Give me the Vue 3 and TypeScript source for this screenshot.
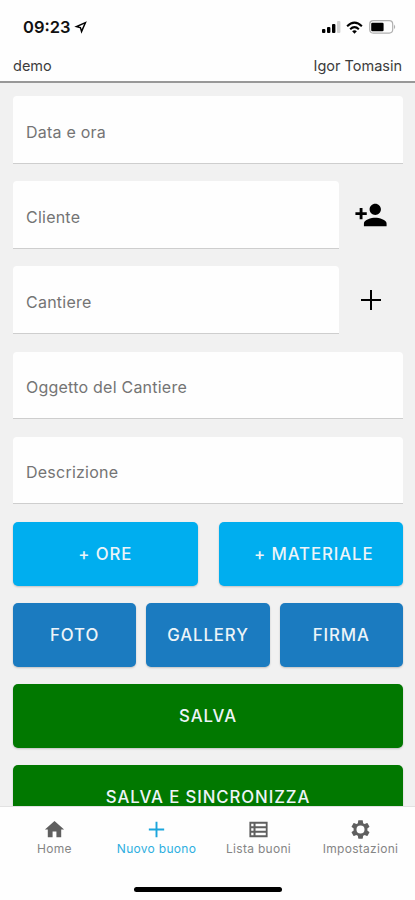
<script setup lang="ts">
interface Field {
  label: string
  action?: 'person' | 'plus'
}

interface Tab {
  id: string
  label: string
  active?: boolean
}

const fields: Field[] = [
  { label: 'Data e ora' },
  { label: 'Cliente', action: 'person' },
  { label: 'Cantiere', action: 'plus' },
  { label: 'Oggetto del Cantiere' },
  { label: 'Descrizione' },
]

const tabs: Tab[] = [
  { id: 'home', label: 'Home' },
  { id: 'new', label: 'Nuovo buono', active: true },
  { id: 'list', label: 'Lista buoni' },
  { id: 'settings', label: 'Impostazioni' },
]
</script>

<template>
  <div class="screen">
    <div class="status">
      <div class="clock">
        <span class="time">09:23</span>
        <svg class="location" viewBox="0 0 14 14"><path fill-rule="evenodd" d="M13.8.3 8 13.8 6.3 7.7.3 6.2ZM10.8 3.2 5 5.9 7.5 6.5 8.3 9Z" /></svg>
      </div>
      <div class="signals">
        <svg class="bars" viewBox="0 0 19 12">
          <rect x="0" y="8" width="3.4" height="4" rx="1" />
          <rect x="5" y="6" width="3.4" height="6" rx="1" />
          <rect x="10" y="3" width="3.4" height="9" rx="1" />
          <rect x="15" y="0" width="3.4" height="12" rx="1" fill="#d2d2d2" />
        </svg>
        <svg class="wifi" viewBox="0 0 18 13">
          <g fill="none" stroke="#000" stroke-width="2.2">
            <path d="M1.2 5.1Q9-2.3 16.8 5.1" />
            <path d="M4.4 8.3Q9 4 13.6 8.3" />
          </g>
          <path d="M6.5 10.4Q9 8.4 11.5 10.4L9 13Z" />
        </svg>
        <svg class="battery" viewBox="0 0 28 14">
          <rect x=".7" y=".7" width="23" height="12.4" rx="3.5" fill="none" stroke="#b0b0b0" stroke-width="1.2" />
          <rect x="2.2" y="2.8" width="12.4" height="8.4" rx="1.2" />
          <path d="M25 4.5q2.4 2.4 0 4.8Z" fill="#b0b0b0" />
        </svg>
      </div>
    </div>

    <header class="header">
      <span>demo</span>
      <span>Igor Tomasin</span>
    </header>

    <main class="content">
      <div class="fields">
        <div v-for="field in fields" :key="field.label" class="row">
          <div class="field">{{ field.label }}</div>
          <button v-if="field.action" class="action" type="button">
            <svg v-if="field.action === 'person'" class="person" viewBox="0 0 24 24">
              <path d="M15 12c2.21 0 4-1.79 4-4s-1.79-4-4-4-4 1.79-4 4 1.79 4 4 4zm-9-2V7H4v3H1v2h3v3h2v-3h3v-2H6zm9 4c-2.67 0-8 1.34-8 4v2h16v-2c0-2.66-5.33-4-8-4z" />
            </svg>
            <svg v-else class="plus" viewBox="0 0 20 20"><path d="M9 0h2v9h9v2h-9v9H9v-9H0V9h9Z" /></svg>
          </button>
        </div>
      </div>

      <div class="buttons">
        <div class="pair">
          <button class="btn cyan" type="button">+ ORE</button>
          <button class="btn cyan wide-label" type="button">+ MATERIALE</button>
        </div>
        <div class="triple">
          <button class="btn blue" type="button">FOTO</button>
          <button class="btn blue" type="button">GALLERY</button>
          <button class="btn blue" type="button">FIRMA</button>
        </div>
        <button class="btn green" type="button">SALVA</button>
        <button class="btn green" type="button">SALVA E SINCRONIZZA</button>
      </div>
    </main>

    <footer class="footer">
      <nav class="tabs">
        <div v-for="tab in tabs" :key="tab.id" class="tab" :class="{ active: tab.active }">
          <svg class="tab-icon" viewBox="0 0 24 24">
            <path v-if="tab.id === 'home'" d="M10 20v-6h4v6h5v-8h3L12 3 2 12h3v8z" />
            <path v-else-if="tab.id === 'new'" d="M11 4h2v7h7v2h-7v7h-2v-7H4v-2h7Z" />
            <path v-else-if="tab.id === 'list'" fill-rule="evenodd" d="M2.5 4h19v16h-19ZM4.4 5.9v2.7h2.4V5.9Zm4.5 0v2.7h10.7V5.9ZM4.4 10.7v2.7h2.4v-2.7Zm4.5 0v2.7h10.7v-2.7ZM4.4 15.4v2.7h2.4v-2.7Zm4.5 0v2.7h10.7v-2.7Z" />
            <path v-else d="M19.14 12.94c.04-.3.06-.61.06-.94 0-.32-.02-.64-.07-.94l2.03-1.58c.18-.14.23-.41.12-.61l-1.92-3.32c-.12-.22-.37-.29-.59-.22l-2.39.96c-.5-.38-1.03-.7-1.62-.94l-.36-2.54c-.04-.24-.24-.41-.48-.41h-3.84c-.24 0-.43.17-.47.41l-.36 2.54c-.59.24-1.13.57-1.62.94l-2.39-.96c-.22-.08-.47 0-.59.22L2.74 8.87c-.12.21-.08.47.12.61l2.03 1.58c-.05.3-.09.63-.09.94s.02.64.07.94l-2.03 1.58c-.18.14-.23.41-.12.61l1.92 3.32c.12.22.37.29.59.22l2.39-.96c.5.38 1.03.7 1.62.94l.36 2.54c.05.24.24.41.48.41h3.84c.24 0 .44-.17.47-.41l.36-2.54c.59-.24 1.13-.56 1.62-.94l2.39.96c.22.08.47 0 .59-.22l1.92-3.32c.12-.22.07-.47-.12-.61l-2.01-1.58zM12 16.2A4.2 4.2 0 1 1 12 7.8a4.2 4.2 0 0 1 0 8.4z" />
          </svg>
          <span>{{ tab.label }}</span>
        </div>
      </nav>
      <div class="indicator"></div>
    </footer>
  </div>
</template>

<style>
body {
  margin: 0;
  overflow: hidden;
}
</style>

<style scoped>
.screen {
  display: flex;
  flex-direction: column;
  height: 900px;
  overflow: hidden;
  background: #f1f1f1;
  font-family: Inter, Roboto, sans-serif;
  color: #111;
}

.status {
  box-sizing: border-box;
  flex: none;
  display: flex;
  justify-content: space-between;
  height: 52px;
  padding: 17px 18px 0 23px;
  background: #fefefe;
}

.clock {
  display: flex;
  gap: 4px;
  height: 20px;
  align-items: center;
}

.time {
  font-size: 16.5px;
  font-weight: 600;
}

.location {
  width: 13px;
  height: 13px;
}

.signals {
  display: flex;
  align-items: center;
  height: 20px;
}

.bars {
  width: 19px;
  height: 12px;
}

.wifi {
  width: 17px;
  height: 13px;
  margin-left: 5px;
}

.battery {
  width: 28px;
  height: 14px;
  margin-left: 6px;
}

.header {
  box-sizing: border-box;
  flex: none;
  display: flex;
  justify-content: space-between;
  height: 31px;
  padding: 4px 13px 0;
  border-bottom: 2px solid #989898;
  background: #fefefe;
  font-size: 14.5px;
  line-height: 20px;
  color: #3c3c3c;
}

.content {
  flex: 1;
  min-height: 0;
  overflow: hidden;
  padding: 13px 12px 0 13px;
}

.fields {
  display: grid;
  gap: 17.5px;
}

.row {
  display: flex;
  height: 67.7px;
}

.field {
  box-sizing: border-box;
  flex: 1;
  padding: 1.7px 13px 0;
  border-bottom: 1.5px solid #cecece;
  border-radius: 4px 4px 0 0;
  background: #fefefe;
  font-size: 16px;
  line-height: 68px;
  letter-spacing: 0.23px;
  color: #747474;
}

button {
  border: 0;
  padding: 0;
  font: inherit;
}

.action {
  display: flex;
  align-items: center;
  justify-content: center;
  width: 64px;
  background: none;
}

.person {
  width: 34px;
  height: 34px;
}

.plus {
  width: 20px;
  height: 20px;
}

.buttons {
  display: grid;
  gap: 17px;
  margin-top: 17.5px;
}

.pair,
.triple {
  display: grid;
  grid-template-columns: 1fr 1fr;
  gap: 21px;
}

.triple {
  grid-template-columns: repeat(3, 1fr);
  gap: 10px;
}

.btn {
  height: 64px;
  border-radius: 5px;
  box-shadow: 0 1px 2px rgba(0, 0, 0, 0.2);
  color: #edf4f8;
  font-size: 16.8px;
  font-weight: 550;
  letter-spacing: 0.9px;
}

.wide-label {
  padding-left: 6px;
}

.cyan {
  background: #00aeef;
}

.blue {
  background: #1b7bc0;
}

.green {
  background: #017800;
}

.footer {
  box-sizing: border-box;
  flex: none;
  display: flex;
  flex-direction: column;
  align-items: center;
  justify-content: space-between;
  height: 94px;
  padding: 11px 0 8px;
  border-top: 1px solid #e2e2e2;
  background: #fefefe;
}

.tabs {
  display: grid;
  grid-template-columns: repeat(4, 102px);
  justify-content: center;
  width: 100%;
}

.tab {
  display: flex;
  flex-direction: column;
  align-items: center;
  color: #858585;
  font-size: 12px;
  line-height: 16px;
  letter-spacing: 0.3px;
  white-space: nowrap;
}

.tab-icon {
  width: 23px;
  height: 23px;
  fill: #5f5f5f;
}

.active {
  color: #2daee0;
}

.active .tab-icon {
  fill: #1ba5dc;
}

.indicator {
  width: 148px;
  height: 5px;
  border-radius: 3px;
  background: #000;
}
</style>
